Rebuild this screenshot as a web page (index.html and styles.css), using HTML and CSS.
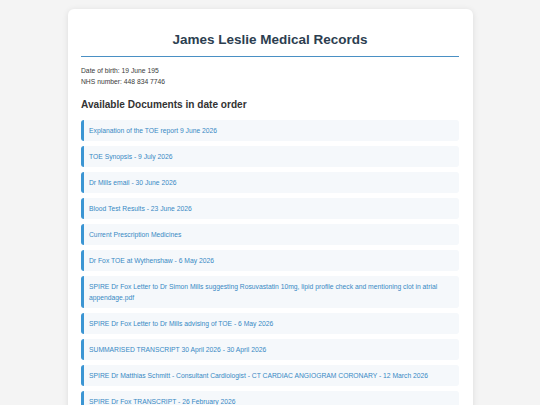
FILE: index.html
```html
<!DOCTYPE html>
<html lang="en">

<head>
  <meta charset="UTF-8">
  <meta name="viewport" content="width=device-width, initial-scale=1.0">
  <title>James Leslie Medical Records</title>
  <link rel="stylesheet" href="styles.css">
</head>

<body>
  <div class="container">
    <h1>James Leslie Medical Records</h1>

    <div class="info">
      <p>Date of birth: 19 June 195</p>
      <p>NHS number: 448 834 7746</p>
    </div>

    <h2>Available Documents in date order</h2>

    <ul class="docs">
      <li><a href="#">Explanation of the TOE report 9 June 2026</a></li>
      <li><a href="#">TOE Synopsis - 9 July 2026</a></li>
      <li><a href="#">Dr Mills email - 30 June 2026</a></li>
      <li><a href="#">Blood Test Results - 23 June 2026</a></li>
      <li><a href="#">Current Prescription Medicines</a></li>
      <li><a href="#">Dr Fox TOE at Wythenshaw - 6 May 2026</a></li>
      <li><a href="#">SPIRE Dr Fox Letter to Dr Simon Mills suggesting Rosuvastatin 10mg, lipid profile check and mentioning clot in atrial appendage.pdf</a></li>
      <li><a href="#">SPIRE Dr Fox Letter to Dr Mills advising of TOE - 6 May 2026</a></li>
      <li><a href="#">SUMMARISED TRANSCRIPT 30 April 2026 - 30 April 2026</a></li>
      <li><a href="#">SPIRE Dr Matthias Schmitt - Consultant Cardiologist - CT CARDIAC ANGIOGRAM CORONARY - 12 March 2026</a></li>
      <li><a href="#">SPIRE Dr Fox TRANSCRIPT - 26 February 2026</a></li>
    </ul>
  </div>
</body>

</html>
```

FILE: styles.css
```css
* {
  box-sizing: border-box;
}

body {
  margin: 0;
  padding: 9px 0;
  background-color: #f4f4f4;
  font-family: "Liberation Sans", Arial, sans-serif;
  color: #333;
}

.container {
  width: 405px;
  margin: 0 auto;
  padding: 13.5px;
  background-color: #fff;
  border-radius: 6px;
  box-shadow: 0 1px 6px rgba(0, 0, 0, 0.1);
}

h1 {
  margin: 9px 0 8.5px;
  padding-bottom: 9px;
  font-size: 13.5px;
  text-align: center;
  color: #2c3e50;
  border-bottom: 1.2px solid #4a90c4;
}

.info p {
  margin: 0;
  font-size: 6.75px;
  line-height: 11px;
  color: #3a3a3a;
}

h2 {
  margin: 11.5px 0 10px;
  font-size: 10.1px;
  color: #333;
}

.docs {
  list-style: none;
  margin: 0;
  padding: 0;
}

.docs li {
  margin-bottom: 5px;
}

.docs a {
  display: block;
  padding: 5px 5px;
  font-size: 6.75px;
  line-height: 11px;
  color: #3889c4;
  text-decoration: none;
  background-color: #f5f8fb;
  border-left: 3px solid #3b95d3;
  border-radius: 3px;
}
```
